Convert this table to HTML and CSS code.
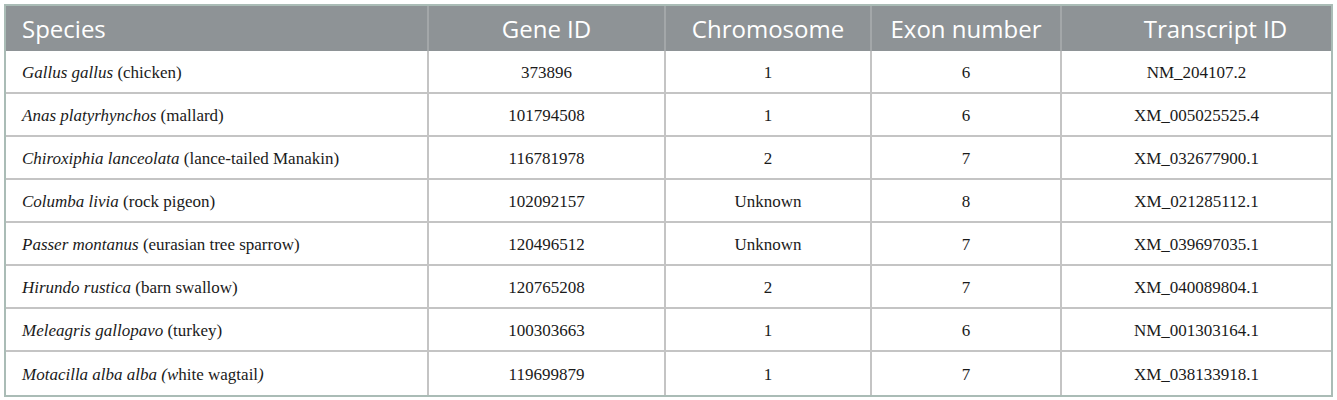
FILE: index.html
```html
<!DOCTYPE html>
<html>
<head>
<meta charset="utf-8">
<link rel="stylesheet" href="styles.css">
</head>
<body>
<table class="data">
  <colgroup>
    <col class="c1"><col class="c2"><col class="c3"><col class="c4"><col class="c5">
  </colgroup>
  <thead>
    <tr>
      <th class="left">Species</th>
      <th>Gene ID</th>
      <th>Chromosome</th>
      <th>Exon number</th>
      <th class="shift">Transcript ID</th>
    </tr>
  </thead>
  <tbody>
    <tr><td class="left"><i>Gallus gallus</i> (chicken)</td><td>373896</td><td>1</td><td>6</td><td>NM_204107.2</td></tr>
    <tr><td class="left"><i>Anas platyrhynchos</i> (mallard)</td><td>101794508</td><td>1</td><td>6</td><td>XM_005025525.4</td></tr>
    <tr><td class="left"><i>Chiroxiphia lanceolata</i> (lance-tailed Manakin)</td><td>116781978</td><td>2</td><td>7</td><td>XM_032677900.1</td></tr>
    <tr><td class="left"><i>Columba livia</i> (rock pigeon)</td><td>102092157</td><td>Unknown</td><td>8</td><td>XM_021285112.1</td></tr>
    <tr><td class="left"><i>Passer montanus</i> (eurasian tree sparrow)</td><td>120496512</td><td>Unknown</td><td>7</td><td>XM_039697035.1</td></tr>
    <tr><td class="left"><i>Hirundo rustica</i> (barn swallow)</td><td>120765208</td><td>2</td><td>7</td><td>XM_040089804.1</td></tr>
    <tr><td class="left"><i>Meleagris gallopavo</i> (turkey)</td><td>100303663</td><td>1</td><td>6</td><td>NM_001303164.1</td></tr>
    <tr><td class="left"><i>Motacilla alba alba (w</i>hite wagtail<i>)</i></td><td>119699879</td><td>1</td><td>7</td><td>XM_038133918.1</td></tr>
  </tbody>
</table>
</body>
</html>
```

FILE: styles.css
```css
html, body {
  margin: 0;
  padding: 0;
  background: #ffffff;
}
body {
  padding: 4px 0 0 4px;
}
.data {
  width: 1329px;
  border-collapse: separate;
  border-spacing: 0;
  border: 2px solid #aabcb6;
  table-layout: fixed;
}
.c1 { width: 423px; }
.c2 { width: 237px; }
.c3 { width: 206px; }
.c4 { width: 190px; }
.c5 { width: 269px; }

.data th {
  background: #8e9396;
  color: #ffffff;
  font-family: "Open Sans", sans-serif;
  font-weight: 400;
  font-size: 24px;
  height: 45px;
  padding: 0 16px;
  text-align: center;
  vertical-align: middle;
  border-right: 2px solid #a3a7a9;
  box-sizing: border-box;
}
.data th.shift {
  padding-left: 54px;
}
.data td {
  font-family: "Liberation Serif", "Times New Roman", serif;
  font-size: 17px;
  color: #1a1a1a;
  height: 43px;
  padding: 2px 16px 0;
  text-align: center;
  vertical-align: middle;
  border-right: 2px solid #c4c4c4;
  border-bottom: 2px solid #c4c4c4;
  box-sizing: border-box;
}
.data th:last-child,
.data td:last-child {
  border-right: none;
}
.data tbody tr:last-child td {
  border-bottom: none;
}
.data .left {
  text-align: left;
  padding-left: 16px;
}
```
